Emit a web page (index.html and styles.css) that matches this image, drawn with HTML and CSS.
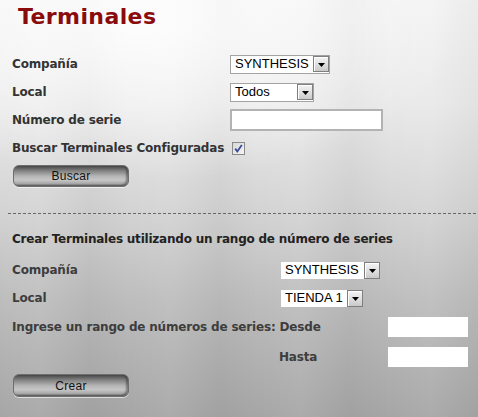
FILE: index.html
```html
<!DOCTYPE html>
<html lang="es">
<head>
<meta charset="utf-8">
<title>Terminales</title>
<link rel="stylesheet" href="styles.css">
</head>
<body>
<div class="page">
  <h1 class="title">Terminales</h1>

  <div class="form-grid first">
    <div class="label">Compañía</div>
    <div class="field">
      <div class="select framed w100">
        <span class="select-text">SYNTHESIS</span>
        <span class="select-arrow"><svg width="7" height="4" viewBox="0 0 7 4"><path d="M0 0H7L3.5 4Z" fill="#000"/></svg></span>
      </div>
    </div>

    <div class="label">Local</div>
    <div class="field">
      <div class="select framed w84">
        <span class="select-text">Todos</span>
        <span class="select-arrow"><svg width="7" height="4" viewBox="0 0 7 4"><path d="M0 0H7L3.5 4Z" fill="#000"/></svg></span>
      </div>
    </div>

    <div class="label">Número de serie</div>
    <div class="field">
      <div class="text-input"></div>
    </div>

    <div class="label">Buscar Terminales Configuradas</div>
    <div class="field check-field">
      <span class="checkbox"><svg width="9" height="9" viewBox="0 0 9 9"><path d="M1.2 4.6L3.3 7.4L7.8 1" fill="none" stroke="#3a4a9c" stroke-width="1.8"/></svg></span>
    </div>
  </div>

  <div class="button-row first-btn">
    <button class="btn" type="button">Buscar</button>
  </div>

  <div class="divider"></div>

  <h2 class="section-title">Crear Terminales utilizando un rango de número de series</h2>

  <div class="form-grid second">
    <div class="label">Compañía</div>
    <div class="field span2">
      <div class="select plain w99">
        <span class="select-text">SYNTHESIS</span>
        <span class="select-arrow"><svg width="7" height="4" viewBox="0 0 7 4"><path d="M0 0H7L3.5 4Z" fill="#000"/></svg></span>
      </div>
    </div>

    <div class="label">Local</div>
    <div class="field span2">
      <div class="select plain w82">
        <span class="select-text">TIENDA 1</span>
        <span class="select-arrow"><svg width="7" height="4" viewBox="0 0 7 4"><path d="M0 0H7L3.5 4Z" fill="#000"/></svg></span>
      </div>
    </div>

    <div class="label span2">Ingrese un rango de números de series: Desde</div>
    <div class="field"><div class="range-input"></div></div>

    <div class="label"></div>
    <div class="label hasta">Hasta</div>
    <div class="field"><div class="range-input"></div></div>
  </div>

  <div class="button-row">
    <button class="btn btn-crear" type="button">Crear</button>
  </div>
</div>
</body>
</html>
```
FILE: styles.css
```css
html, body {
  margin: 0;
  padding: 0;
  height: 100%;
}

body {
  font-family: "DejaVu Sans", Verdana, sans-serif;
  color: #333;
  background:
    radial-gradient(ellipse 320px 160px at 30% 5%, rgba(255,255,255,0.85), rgba(255,255,255,0) 100%),
    repeating-linear-gradient(90deg, rgba(255,255,255,0) 0px, rgba(255,255,255,0.06) 40px, rgba(0,0,0,0.03) 90px, rgba(255,255,255,0) 130px),
    linear-gradient(180deg, #f3f3f3 0%, #e9e9e9 25%, #d4d4d4 50%, #bdbdbd 72%, #a6a6a6 100%);
  overflow: hidden;
}

.page {
  height: 417px;
  padding: 0 0 0 12px;
  box-sizing: border-box;
}

.title {
  margin: 0;
  padding: 3px 0 0 6px;
  height: 47px;
  box-sizing: border-box;
  font-size: 22px;
  font-weight: bold;
  color: #8a0b0b;
  line-height: 28px;
  letter-spacing: 0.4px;
}

.form-grid {
  display: grid;
  align-items: center;
}

.form-grid.first {
  margin-top: 3px;
  grid-template-columns: 218px auto;
  grid-template-rows: repeat(4, 28px);
}

.form-grid.second {
  grid-template-columns: 269px 107px auto;
  grid-template-rows: 28px 28px 30px 30px;
}

.label {
  font-size: 12px;
  font-weight: bold;
  white-space: nowrap;
  letter-spacing: -0.18px;
}

.second .label {
  color: #3d3d3d;
}

.span2 {
  grid-column: span 2;
}

.hasta {
  margin-left: -2px;
}

.field {
  display: flex;
  align-items: center;
}

.select {
  display: flex;
  align-items: center;
  background: #fff;
  box-sizing: border-box;
  font-family: "Liberation Sans", Arial, sans-serif;
  font-size: 13px;
  color: #000;
}

.select.framed {
  height: 19px;
  border: 1px solid #a3a3a3;
}

.select.plain {
  height: 17px;
}

.w100 { width: 100px; }
.w84 { width: 84px; }
.w99 { width: 99px; }
.w82 { width: 82px; }

.select-text {
  flex: 1;
  padding-left: 4px;
  line-height: 16px;
}

.select-arrow {
  width: 16px;
  height: 16px;
  box-sizing: border-box;
  border: 1px solid #7f7f7f;
  background: linear-gradient(180deg, #f4f4f4 0%, #dcdcdc 60%, #c9c9c9 100%);
  display: flex;
  align-items: center;
  justify-content: center;
  box-shadow: inset 1px 1px 0 #fff;
}

.select-arrow svg {
  display: block;
  margin-top: 1px;
}

.select.plain .select-arrow {
  height: 17px;
}

.text-input {
  width: 153px;
  height: 22px;
  box-sizing: border-box;
  background: #fff;
  border: 2px solid #b3b3b3;
}

.checkbox {
  margin-left: 2px;
  width: 13px;
  height: 13px;
  box-sizing: border-box;
  border: 1px solid #8a8a8a;
  background: linear-gradient(135deg, #d8d8d8 0%, #f4f4f4 100%);
  display: flex;
  align-items: center;
  justify-content: center;
}

.checkbox svg {
  display: block;
}

.range-input {
  width: 80px;
  height: 20px;
  background: #fff;
}

.button-row {
  display: flex;
}

.button-row.first-btn {
  margin-top: 3px;
}

.btn {
  margin: 0 0 0 1px;
  width: 116px;
  height: 22px;
  padding: 0;
  border: 1px solid #6e6e6e;
  border-radius: 6px;
  font-family: "Liberation Sans", Arial, sans-serif;
  font-size: 12px;
  color: #111;
  letter-spacing: 0.3px;
  background: linear-gradient(180deg, #474747 0%, #7d7d7d 22%, #b4b4b4 50%, #c6c6c6 70%, #a9a9a9 88%, #7a7a7a 100%);
  box-shadow: inset -2px -1px 2px rgba(0,0,0,0.35), 0 1px 0 rgba(255,255,255,0.6);
}

.btn-crear {
  height: 23px;
}

.divider {
  margin: 26px 0 0 -4px;
  height: 1px;
  background: repeating-linear-gradient(90deg, #666 0px, #666 3px, transparent 3px, transparent 5px);
}

.section-title {
  margin: 11px 0 3px 0;
  height: 28px;
  font-size: 12px;
  font-weight: bold;
  line-height: 28px;
  color: #222;
  letter-spacing: -0.22px;
  white-space: nowrap;
}

.form-grid.second + .button-row {
  margin-top: 2px;
}
```
